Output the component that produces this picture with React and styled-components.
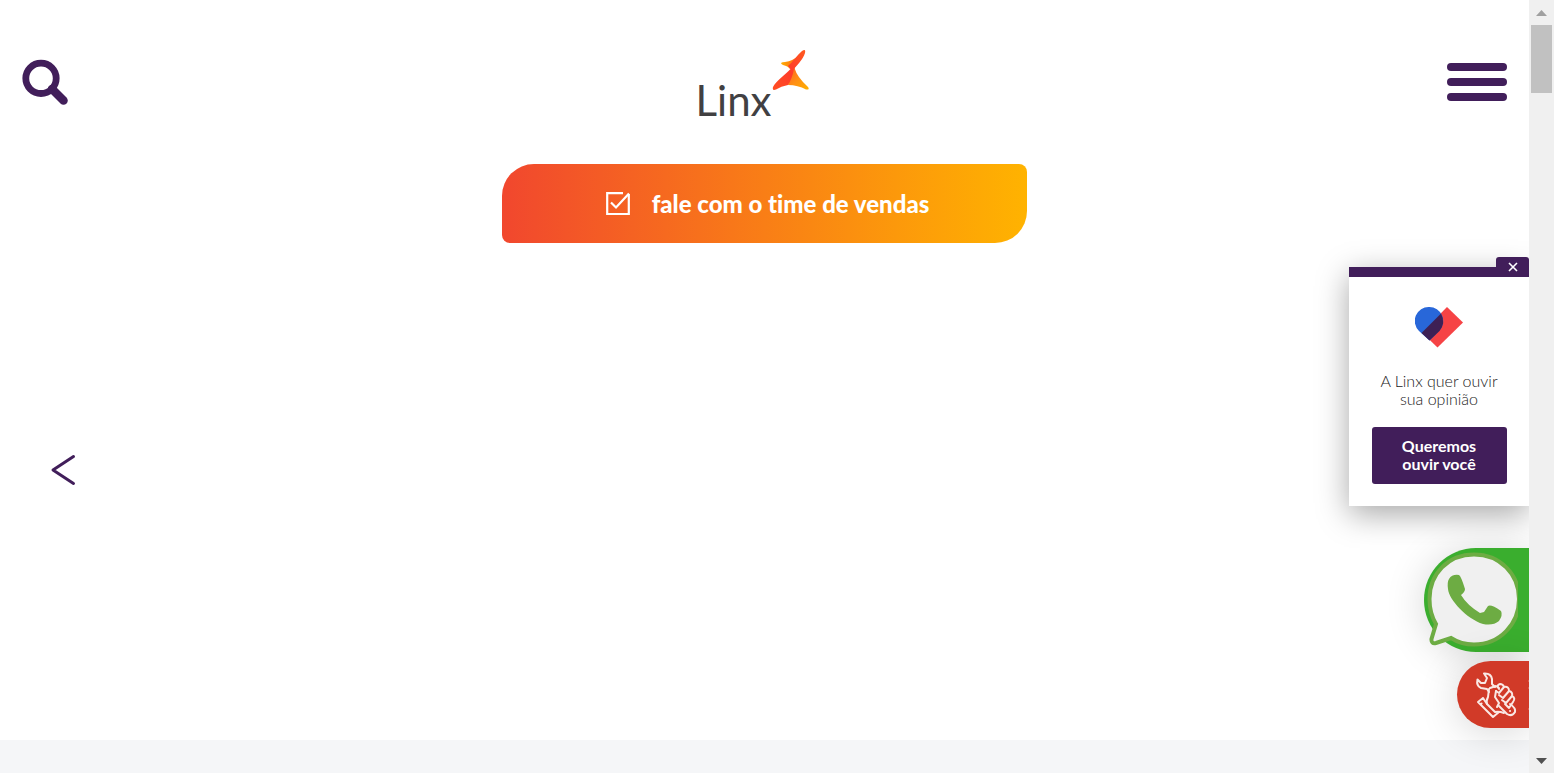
import React from "react";
import styled, { createGlobalStyle } from "styled-components";

const purple = "#411e5a";

const GlobalStyle = createGlobalStyle`
  * { box-sizing: border-box; }
  body { margin: 0; background: #fff; overflow: hidden; }
  button { border: 0; padding: 0; background: none; cursor: pointer; }
  svg { display: block; }
`;

const Viewport = styled.div`
  display: flex;
  height: 100vh;
  font-family: Lato, "Open Sans", sans-serif;
`;

const Page = styled.div`
  position: relative;
  flex: 1;
  min-width: 0;
  display: flex;
  flex-direction: column;
  overflow: hidden;
`;

const Header = styled.header`
  display: grid;
  grid-template-columns: 1fr auto 1fr;
  align-items: center;
  height: 164px;
  padding: 0 22px;
`;

const IconButton = styled.button`
  justify-self: ${(p) => p.$side};
`;

const Logo = styled.a`
  display: flex;
  align-items: flex-start;
  height: 66px;
  margin-left: -24px;
  color: #414042;
  text-decoration: none;
`;

const LogoName = styled.span`
  padding-top: 26px;
  font-size: 42px;
  font-weight: 400;
  line-height: 50px;
`;

const Bars = styled.span`
  display: grid;
  gap: 7px;
  width: 60px;
`;

const Bar = styled.span`
  height: 8px;
  border-radius: 4px;
  background: ${purple};
`;

const SalesButton = styled.button`
  align-self: center;
  display: flex;
  align-items: center;
  justify-content: center;
  gap: 22px;
  width: 525px;
  max-width: 100%;
  height: 79px;
  flex: none;
  padding-left: 6px;
  border-radius: 32px 8px 32px 8px;
  background: linear-gradient(90deg, #f1472e, #f97e16 50%, #ffb300);
  color: #fff;
  font-family: Lato, sans-serif;
  font-size: 24px;
  font-weight: 900;
  font-variant-ligatures: none;
  line-height: 32px;
`;

const Carousel = styled.main`
  flex: 1;
  display: flex;
  align-items: center;
  padding: 0 50px 44px;
`;

const NextSection = styled.section`
  flex: none;
  height: 33px;
  background: #f5f6f8;
`;

const Floating = styled.aside`
  position: absolute;
  top: 257px;
  right: 0;
  display: flex;
  flex-direction: column;
  align-items: flex-end;
`;

const CloseTab = styled.button`
  display: grid;
  place-items: center;
  width: 33px;
  height: 20px;
  margin-bottom: -10px;
  border-radius: 3px 3px 0 0;
  background: ${purple};
  z-index: 1;
`;

const Survey = styled.div`
  display: flex;
  flex-direction: column;
  align-items: center;
  width: 180px;
  height: 239px;
  margin-bottom: 42px;
  padding-top: 30px;
  border-top: 10px solid ${purple};
  background: #fff;
  box-shadow: 0 8px 30px rgba(0, 0, 0, 0.35);
`;

const Question = styled.p`
  width: 132px;
  margin: 23px 0 19px;
  color: #222;
  font-size: 16px;
  font-weight: 300;
  line-height: 18px;
  text-align: center;
`;

const SurveyButton = styled.button`
  width: 135px;
  height: 57px;
  padding: 0 24px 2px;
  border-radius: 3px;
  background: ${purple};
  color: #fff;
  font-family: Lato, sans-serif;
  font-size: 16px;
  font-weight: 700;
  line-height: 18px;
`;

const ContactLink = styled.a`
  display: flex;
  align-items: center;
  width: ${(p) => p.$width};
  height: ${(p) => p.$height};
  margin-bottom: 9px;
  border-radius: 52px 0 0 52px;
  background: ${(p) => p.$color};
  box-shadow: 0 4px 40px rgba(0, 0, 0, 0.16);
`;

const ScrollTrack = styled.div`
  display: flex;
  flex-direction: column;
  align-items: center;
  flex: none;
  width: 25px;
  background: #f0f0f0;
`;

const ScrollArrow = styled.span`
  display: grid;
  place-items: center;
  width: 25px;
  height: 25px;
`;

const ScrollThumb = styled.div`
  width: 21px;
  height: 68px;
  margin-bottom: auto;
  background: #c1c1c1;
`;

function SearchIcon() {
  return (
    <svg width="47" height="46" viewBox="0 0 47 46" fill="none" stroke={purple}>
      <circle cx="19" cy="19.300" r="15.2" strokeWidth="6.8" />
      <path d="M30 30 41.500 41.500" strokeWidth="8.5" strokeLinecap="round" />
    </svg>
  );
}

function LogoStar() {
  return (
    <svg width="38" height="42" viewBox="0 0 38 42">
      <defs>
        <linearGradient id="wing" x1="0" y1="0" x2="1" y2="0">
          <stop offset="0" stopColor="#ffb000" />
          <stop offset="1" stopColor="#ff5a20" />
        </linearGradient>
        <linearGradient id="tail" x1="0" y1="0" x2="1" y2="1">
          <stop offset="0" stopColor="#ff5f20" />
          <stop offset=".5" stopColor="#ff8f14" />
          <stop offset="1" stopColor="#ffb000" />
        </linearGradient>
        <linearGradient id="flame" x1="1" y1="0" x2="0" y2="1">
          <stop offset="0" stopColor="#ff5a20" />
          <stop offset=".5" stopColor="#ff3b2a" />
          <stop offset="1" stopColor="#ff4f22" />
        </linearGradient>
      </defs>
      <path d="M9 14Q10 13 13 13Q21 12 27 6L22 21 18 20Q16 17 11 16Q9 15 9 14Z" fill="url(#wing)" />
      <path d="M20 18 22.500 19Q25 28 36 38Q38 41 34 40.500Q26 36 16 36Z" fill="url(#tail)" />
      <path d="M30 2Q34-1 33 4C31 11 24 17 22 20Q20 30 16 36Q9 37 4 40.500Q0 42 1 38C4 32 13 26 18.500 20L16 17C21 13 25 6 30 2Z" fill="url(#flame)" />
    </svg>
  );
}

function CheckIcon() {
  return (
    <svg width="24" height="24" viewBox="0 0 24 24" fill="none" stroke="#fff" strokeWidth="2.200">
      <path d="M17 1.2H1.2V22H22.8V2" />
      <path d="m5 10.500 5 5L23 1.500" />
    </svg>
  );
}

function HeartIcon() {
  return (
    <svg width="49" height="42" viewBox="0 0 49 42">
      <path d="M32 0 48 15.500 22.500 40.500 7 25.500Z" fill="#f64345" />
      <path d="M14 0A14 14 0 0 0 4 24L14.500 33.500 24 24A14 14 0 0 0 14 0Z" fill="#2867d9" />
      <path d="M26 6.500Q31 16 24.500 24L14.500 33.500 6.500 26Z" fill="#3e2055" />
    </svg>
  );
}

function WhatsAppIcon() {
  return (
    <svg width="94" height="104" viewBox="0 0 94 104">
      <path d="M50 6.500C24 6.500 5.500 26 5.500 51Q5.500 65 12 76L7.500 91Q7 96 12 95L27 90Q37 96.500 50 96.500C76 96.500 95 76 95 51S76 6.500 50 6.500Z" fill="#f0f0f0" stroke="#6dac43" strokeWidth="4" />
      <path d="M25 31Q28 26 35 27Q37 28 41 41Q41 44 37 47Q43 57 56 65L60 64 64 58Q67 56 77 63Q79 67 75 73Q69 78 59 76C43 71 25 52 24 41Q23 34 25 31Z" fill="#6dac43" />
    </svg>
  );
}

function ToolsIcon() {
  return (
    <svg width="72" height="67" viewBox="0 0 72 67" fill="none" stroke="#fae8e4" strokeWidth="2" strokeLinejoin="round" strokeLinecap="round">
      <path d="M27 12.500 30 17 28 22 24 22 20.500 18.500Q19 25 24 27L30 28 32 31M27 12.500Q34 12 35 18L35 23 38 26" />
      <path d="M32 28 31 36Q29 40 30 43L38 51Q42 50 47 52M33 27 39 25 42 27M39 30 38 36 42 42 40 46" />
      <path d="m26 37-5 4 15 15 6-5M26 37l4 6M24.500 42.500h.1" />
      <path d="M42 28q-3-4 1-5 3 0 4 3l-5 6-3-2M47 26q5-1 5 4l-6 7-4-3M52 30q4 1 3 5l-6 7-4-3M55 35q4 2 1 6l-4 6-4-4" />
      <path d="M42 45 50 53Q55 56 58 51 59 47 53 43M53 50h.1" />
      <path d="M71 20h1M71 27h1M71 48h1" stroke="#e78475" strokeWidth="1" strokeLinecap="butt" />
    </svg>
  );
}

export default function App() {
  return (
    <>
      <GlobalStyle />
      <Viewport>
        <Page>
          <Header>
            <IconButton $side="start" aria-label="Buscar"><SearchIcon /></IconButton>
            <Logo href="#">
              <LogoName>Linx</LogoName>
              <LogoStar />
            </Logo>
            <IconButton $side="end" aria-label="Menu">
              <Bars><Bar /><Bar /><Bar /></Bars>
            </IconButton>
          </Header>
          <SalesButton><CheckIcon />fale com o time de vendas</SalesButton>
          <Carousel>
            <IconButton aria-label="Anterior">
              <svg width="26" height="32" viewBox="0 0 26 32" fill="none" stroke={purple} strokeWidth="3" strokeLinecap="round" strokeLinejoin="round">
                <path d="M23.500 2.500 3 16l20.500 13.500" />
              </svg>
            </IconButton>
          </Carousel>
          <NextSection />
          <Floating>
            <CloseTab aria-label="Fechar">
              <svg width="10" height="10" viewBox="0 0 10 10" stroke="#fff" strokeWidth="1.600">
                <path d="m1 1 8 8M9 1 1 9" />
              </svg>
            </CloseTab>
            <Survey>
              <HeartIcon />
              <Question>A Linx quer ouvir sua opinião</Question>
              <SurveyButton>Queremos ouvir você</SurveyButton>
            </Survey>
            <ContactLink href="#" aria-label="WhatsApp" $width="105px" $height="104px" $color="#3aae2e"><WhatsAppIcon /></ContactLink>
            <ContactLink href="#" aria-label="Suporte" $width="72px" $height="67px" $color="#d13a28"><ToolsIcon /></ContactLink>
          </Floating>
        </Page>
        <ScrollTrack aria-hidden="true">
          <ScrollArrow>
            <svg width="11" height="6" viewBox="0 0 11 6"><path d="M0 6 5.500 0 11 6Z" fill="#a0a0a0" /></svg>
          </ScrollArrow>
          <ScrollThumb />
          <ScrollArrow>
            <svg width="11" height="6" viewBox="0 0 11 6"><path d="M0 0h11L5.500 6Z" fill="#505050" /></svg>
          </ScrollArrow>
        </ScrollTrack>
      </Viewport>
    </>
  );
}
